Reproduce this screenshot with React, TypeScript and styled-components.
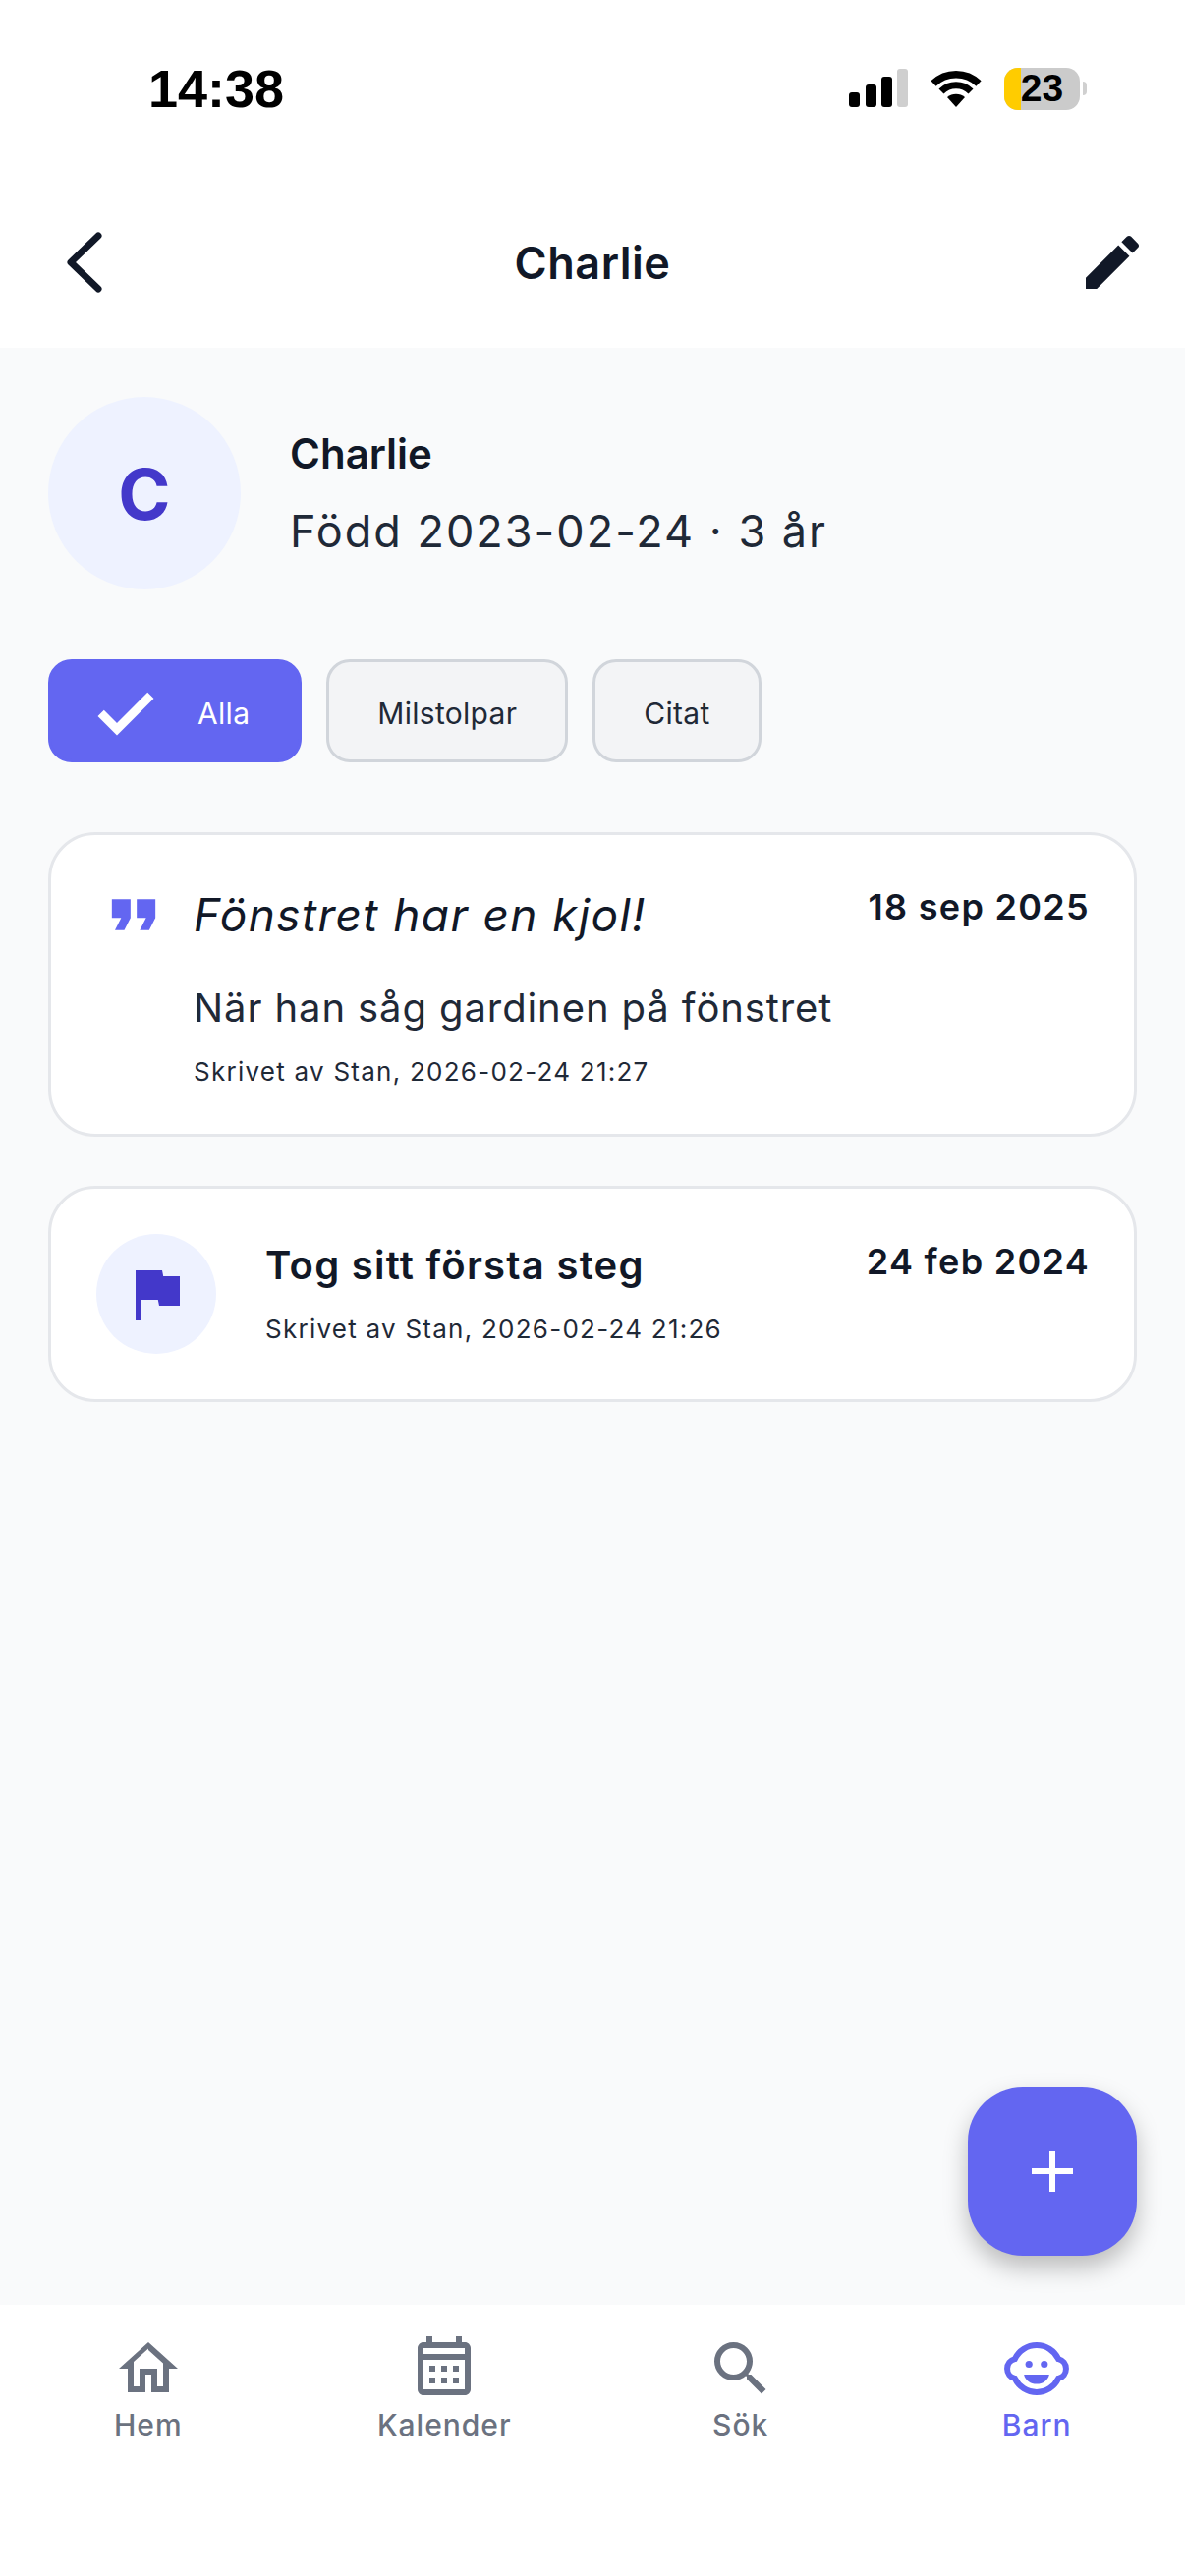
import React from "react";
import styled, { createGlobalStyle } from "styled-components";

const GlobalStyle = createGlobalStyle`
  html, body {
    margin: 0;
    padding: 0;
    background: #ffffff;
  }
  body {
    font-family: Inter, "Noto Sans", sans-serif;
    color: #111827;
  }
  * {
    box-sizing: border-box;
  }
`;

const Screen = styled.div`
  position: relative;
  width: 1206px;
  height: 2622px;
  display: flex;
  flex-direction: column;
  background: #ffffff;
  overflow: hidden;
`;

const StatusBar = styled.div`
  height: 180px;
  padding: 65px 100px 0 151px;
  display: flex;
  justify-content: space-between;
  align-items: flex-start;
`;

const Clock = styled.div`
  font-family: "Liberation Sans", Arial, sans-serif;
  font-weight: 700;
  font-size: 54px;
  line-height: 50px;
  color: #000000;
`;

const StatusIcons = styled.div`
  display: flex;
  align-items: center;
  gap: 23px;
  height: 50px;
`;

const Battery = styled.div`
  position: relative;
  width: 77px;
  height: 43px;
  border-radius: 14px;
  overflow: hidden;
  background: #cbcbcb;
  display: flex;
  align-items: center;
  justify-content: center;
  font-family: "Liberation Sans", Arial, sans-serif;
  font-weight: 700;
  font-size: 39px;
  color: #000000;
`;

const BatteryFill = styled.span`
  position: absolute;
  left: 0;
  top: 0;
  bottom: 0;
  width: 17px;
  background: #ffcc00;
`;

const BatteryLabel = styled.span`
  position: relative;
`;

const BatteryWrap = styled.div`
  display: flex;
  align-items: center;
  gap: 3px;
`;

const BatteryTip = styled.span`
  width: 4px;
  height: 14px;
  border-radius: 0 7px 7px 0;
  background: #d0d0d0;
`;

const Header = styled.header`
  height: 174px;
  padding: 0 38px;
  display: grid;
  grid-template-columns: 1fr auto 1fr;
  align-items: center;
`;

const BackButton = styled.div`
  margin-left: 26px;
  display: flex;
`;

const HeaderEnd = styled.div`
  display: flex;
  justify-content: flex-end;
`;

const HeaderTitle = styled.h1`
  margin: 0;
  font-size: 45px;
  font-weight: 600;
  letter-spacing: 0.5px;
  color: #111827;
`;

const Content = styled.main`
  flex: 1;
  background: #f9fafb;
  padding: 50px 49px 0;
  display: flex;
  flex-direction: column;
`;

const Profile = styled.section`
  display: flex;
  align-items: center;
  gap: 50px;
`;

const Avatar = styled.div`
  width: 196px;
  height: 196px;
  border-radius: 50%;
  background: #eef2ff;
  color: #4338ca;
  display: flex;
  align-items: center;
  justify-content: center;
  font-size: 72px;
  font-weight: 700;
`;

const ProfileText = styled.div`
  display: flex;
  flex-direction: column;
  gap: 25px;
`;

const ProfileName = styled.div`
  font-size: 42px;
  font-weight: 600;
  line-height: 52px;
`;

const ProfileBorn = styled.div`
  font-size: 45px;
  line-height: 56px;
  letter-spacing: 2px;
  color: #1f2937;
`;

const Chips = styled.div`
  display: flex;
  gap: 25px;
  margin-top: 71px;
`;

const Chip = styled.button<{ $active?: boolean }>`
  height: 105px;
  padding: ${(p) => (p.$active ? "4px 50px 0 40px" : "4px 49px 0")};
  border-radius: 24px;
  border: 3px solid ${(p) => (p.$active ? "#6366f1" : "#d1d5db")};
  background: ${(p) => (p.$active ? "#6366f1" : "#f3f4f6")};
  color: ${(p) => (p.$active ? "#ffffff" : "#1f2937")};
  display: flex;
  align-items: center;
  gap: 37px;
  font-family: inherit;
  font-size: 30px;
  font-weight: 400;
  letter-spacing: 0.3px;
`;

const Card = styled.article<{ $compact?: boolean }>`
  margin-top: ${(p) => (p.$compact ? "50px" : "71px")};
  height: ${(p) => (p.$compact ? "220px" : "310px")};
  border: 3px solid #e5e7eb;
  border-radius: 48px;
  background: #ffffff;
  display: flex;
  align-items: ${(p) => (p.$compact ? "center" : "flex-start")};
  padding: ${(p) => (p.$compact ? "0 45px 4px 46px" : "51px 45px 0 46px")};
`;

const QuoteMark = styled.div`
  width: 76px;
  height: 60px;
  margin-right: 23px;
  color: #6366f1;
  flex: none;
  display: flex;
  align-items: center;
  justify-content: center;
`;

const FlagBadge = styled.div`
  width: 122px;
  height: 122px;
  margin-top: 4px;
  border-radius: 50%;
  background: #eef2ff;
  color: #4338ca;
  flex: none;
  margin-right: 50px;
  display: flex;
  align-items: center;
  justify-content: center;
`;

const CardBody = styled.div`
  flex: 1;
  min-width: 0;
  display: flex;
  flex-direction: column;
`;

const CardRow = styled.div`
  display: flex;
  justify-content: space-between;
  align-items: flex-start;
`;

const QuoteText = styled.div`
  font-size: 46px;
  line-height: 60px;
  font-style: italic;
  letter-spacing: 1.4px;
  color: #111827;
`;

const MilestoneText = styled.div`
  font-size: 40px;
  line-height: 56px;
  font-weight: 600;
  letter-spacing: 1.25px;
  color: #111827;
`;

const CardDate = styled.div<{ $low?: boolean }>`
  margin-top: ${(p) => (p.$low ? "2px" : "0")};
  font-size: 36px;
  line-height: 44px;
  font-weight: 600;
  letter-spacing: 1.3px;
  color: #111827;
`;

const Context = styled.div`
  margin-top: 37px;
  font-size: 40px;
  line-height: 56px;
  letter-spacing: 0.9px;
  color: #1f2937;
`;

const Byline = styled.div`
  margin-top: 19px;
  font-size: 26px;
  line-height: 36px;
  letter-spacing: 1.25px;
  color: #1f2937;
`;

const Fab = styled.button`
  position: absolute;
  left: 985px;
  top: 2124px;
  width: 172px;
  height: 172px;
  border: none;
  border-radius: 56px;
  background: #6366f1;
  color: #ffffff;
  display: flex;
  align-items: center;
  justify-content: center;
  box-shadow: 0 12px 24px rgba(0, 0, 0, 0.25);
`;

const TabBar = styled.nav`
  height: 276px;
  background: #ffffff;
  display: grid;
  grid-template-columns: repeat(4, 1fr);
  padding-top: 29px;
  align-items: start;
`;

const Tab = styled.div<{ $active?: boolean }>`
  display: flex;
  flex-direction: column;
  align-items: center;
  gap: 1px;
  color: ${(p) => (p.$active ? "#6366f1" : "#6b7280")};
  font-size: 30px;
  font-weight: 500;
  letter-spacing: 1px;
  line-height: 40px;
`;

const Icon = ({ d, size, color = "currentColor" }: { d: string; size: number; color?: string }) => (
  <svg width={size} height={size} viewBox="0 0 24 24" fill={color}>
    <path d={d} />
  </svg>
);

const paths = {
  pencil:
    "M20.71,7.04C21.1,6.65 21.1,6 20.71,5.63L18.37,3.29C18,2.9 17.35,2.9 16.96,3.29L15.12,5.12L18.87,8.87M3,17.25V21H6.75L17.81,9.93L14.06,6.18L3,17.25Z",
  check: "M21.5,7L9,19.5L2.5,13L4.6,10.9L9,15.3L19.4,4.9L21.5,7Z",
  quote: "M14,17H17L19,13V7H13V13H16M6,17H9L11,13V7H5V13H8L6,17Z",
  flag: "M14.4,6L14,4H5V21H7V14H12.6L13,16H20V6H14.4Z",
  plus: "M19,13H13V19H11V13H5V11H11V5H13V11H19V13Z",
  home: "M12 5.69l5 4.5V18h-2v-6H9v6H7v-8.31l5-4.5M12 3L2 12h3v8h6v-6h2v6h6v-8h3L12 3z",
  calendar:
    "M7 11H9V13H7V11M21 5V19C21 20.11 20.11 21 19 21H5C3.89 21 3 20.1 3 19V5C3 3.9 3.9 3 5 3H6V1H8V3H16V1H18V3H19C20.11 3 21 3.9 21 5M5 7H19V5H5V7M19 19V9H5V19H19M15 13V11H17V13H15M11 13V11H13V13H11M7 15H9V17H7V15M15 17V15H17V17H15M11 17V15H13V17H11Z",
  search:
    "M9.5,3A6.5,6.5 0 0,1 16,9.5C16,11.11 15.41,12.59 14.44,13.73L14.71,14H15.5L20.5,19L19,20.5L14,15.5V14.71L13.73,14.44C12.59,15.41 11.11,16 9.5,16A6.5,6.5 0 0,1 3,9.5A6.5,6.5 0 0,1 9.5,3M9.5,5C7,5 5,7 5,9.5C5,12 7,14 9.5,14C12,14 14,12 14,9.5C14,7 12,5 9.5,5Z",
};

const BabyFace = ({ size }: { size: number }) => (
  <svg width={size} height={size} viewBox="0 0 24 24" fill="none" stroke="currentColor">
    <path
      strokeWidth={2}
      d="M4.6 8.7A8.2 8.2 0 0 1 19.4 8.7A3.4 3.4 0 0 1 19.4 15.3A8.2 8.2 0 0 1 4.6 15.3A3.4 3.4 0 0 1 4.6 8.7Z"
    />
    <circle cx="9.4" cy="10.5" r="1.2" fill="currentColor" stroke="none" />
    <circle cx="14.6" cy="10.5" r="1.2" fill="currentColor" stroke="none" />
    <path d="M7.7 14h8.6c-.5 2-2.2 3.2-4.3 3.2S8.200 16 7.700 14z" fill="currentColor" stroke="none" />
  </svg>
);

const Signal = () => (
  <svg width="60" height="40" viewBox="0 0 60 40">
    <rect x="0" y="24" width="11" height="15" rx="3" fill="#000" />
    <rect x="17" y="16" width="11" height="23" rx="3" fill="#000" />
    <rect x="33" y="8" width="11" height="31" rx="3" fill="#000" />
    <rect x="49" y="0" width="11" height="39" rx="3" fill="#cfcfcf" />
  </svg>
);

const Wifi = () => (
  <svg width="52" height="40" viewBox="0 0 52 40">
    <path d="M26 39 L17 29 A14 14 0 0 1 35 29 Z" fill="#000" />
    <path d="M3 14 A33 33 0 0 1 49 14" fill="none" stroke="#000" strokeWidth="7.5" transform="translate(0 1)" />
    <path d="M11 22 A21 21 0 0 1 41 22" fill="none" stroke="#000" strokeWidth="7" transform="translate(0 1)" />
  </svg>
);

export default function App() {
  return (
    <Screen>
      <GlobalStyle />
      <StatusBar>
        <Clock>14:38</Clock>
        <StatusIcons>
          <Signal />
          <Wifi />
          <BatteryWrap>
            <Battery>
              <BatteryFill />
              <BatteryLabel>23</BatteryLabel>
            </Battery>
            <BatteryTip />
          </BatteryWrap>
        </StatusIcons>
      </StatusBar>

      <Header>
        <BackButton>
          <svg width="48" height="66" viewBox="0 0 48 66" fill="none" stroke="#111827" strokeWidth="7" strokeLinecap="round" strokeLinejoin="round">
            <path d="M36 6 L8 33 L36 60" />
          </svg>
        </BackButton>
        <HeaderTitle>Charlie</HeaderTitle>
        <HeaderEnd>
          <Icon d={paths.pencil} size={72} color="#111827" />
        </HeaderEnd>
      </Header>

      <Content>
        <Profile>
          <Avatar>C</Avatar>
          <ProfileText>
            <ProfileName>Charlie</ProfileName>
            <ProfileBorn>Född 2023-02-24 · 3 år</ProfileBorn>
          </ProfileText>
        </Profile>

        <Chips>
          <Chip $active>
            <Icon d={paths.check} size={72} />
            Alla
          </Chip>
          <Chip>Milstolpar</Chip>
          <Chip>Citat</Chip>
        </Chips>

        <Card>
          <QuoteMark>
            <Icon d={paths.quote} size={82} />
          </QuoteMark>
          <CardBody>
            <CardRow>
              <QuoteText>Fönstret har en kjol!</QuoteText>
              <CardDate>18 sep 2025</CardDate>
            </CardRow>
            <Context>När han såg gardinen på fönstret</Context>
            <Byline>Skrivet av Stan, 2026-02-24 21:27</Byline>
          </CardBody>
        </Card>

        <Card $compact>
          <FlagBadge>
            <Icon d={paths.flag} size={72} />
          </FlagBadge>
          <CardBody>
            <CardRow>
              <MilestoneText>Tog sitt första steg</MilestoneText>
              <CardDate $low>24 feb 2024</CardDate>
            </CardRow>
            <Byline>Skrivet av Stan, 2026-02-24 21:26</Byline>
          </CardBody>
        </Card>
      </Content>

      <Fab>
        <Icon d={paths.plus} size={72} />
      </Fab>

      <TabBar>
        <Tab>
          <Icon d={paths.home} size={72} />
          Hem
        </Tab>
        <Tab>
          <Icon d={paths.calendar} size={72} />
          Kalender
        </Tab>
        <Tab>
          <Icon d={paths.search} size={72} />
          Sök
        </Tab>
        <Tab $active>
          <BabyFace size={72} />
          Barn
        </Tab>
      </TabBar>
    </Screen>
  );
}
